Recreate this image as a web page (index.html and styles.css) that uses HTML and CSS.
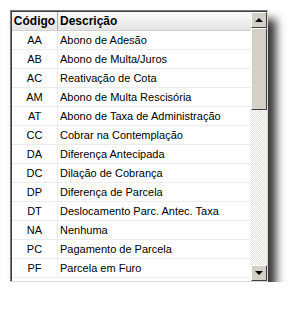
FILE: index.html
```html
<!DOCTYPE html>
<html lang="pt">
<head>
<meta charset="UTF-8">
<title>Códigos</title>
<link rel="stylesheet" href="styles.css">
</head>
<body>

<div class="frame">
  <div class="grid">
    <div class="row head">
      <div class="code">Código</div>
      <div class="desc">Descrição</div>
    </div>
    <div class="row"><div class="code">AA</div><div class="desc">Abono de Adesão</div></div>
    <div class="row"><div class="code">AB</div><div class="desc">Abono de Multa/Juros</div></div>
    <div class="row"><div class="code">AC</div><div class="desc">Reativação de Cota</div></div>
    <div class="row"><div class="code">AM</div><div class="desc">Abono de Multa Rescisória</div></div>
    <div class="row"><div class="code">AT</div><div class="desc">Abono de Taxa de Administração</div></div>
    <div class="row"><div class="code">CC</div><div class="desc">Cobrar na Contemplação</div></div>
    <div class="row"><div class="code">DA</div><div class="desc">Diferença Antecipada</div></div>
    <div class="row"><div class="code">DC</div><div class="desc">Dilação de Cobrança</div></div>
    <div class="row"><div class="code">DP</div><div class="desc">Diferença de Parcela</div></div>
    <div class="row"><div class="code">DT</div><div class="desc">Deslocamento Parc. Antec. Taxa</div></div>
    <div class="row"><div class="code">NA</div><div class="desc">Nenhuma</div></div>
    <div class="row"><div class="code">PC</div><div class="desc">Pagamento de Parcela</div></div>
    <div class="row"><div class="code">PF</div><div class="desc">Parcela em Furo</div></div>
  </div>
  <div class="scrollbar">
    <div class="btn"><span class="arrow up"></span></div>
    <div class="thumb"></div>
    <div class="track"></div>
    <div class="btn"><span class="arrow down"></span></div>
  </div>
</div>

</body>
</html>
```
FILE: styles.css
```css
body {
  margin: 0;
  background: #fff;
  font-family: 'Liberation Sans', Arial, sans-serif;
  font-size: 11px;
  color: #000;
}
.frame {
  margin: 10px 0 0 10px;
  width: 256px;
  height: 270px;
  border: 1px solid #7a7a7a;
  border-right-color: #d8d8d8;
  border-bottom-color: #d8d8d8;
  display: flex;
  box-shadow: 8px 9px 9px rgba(0,0,0,0.8);
  background: #fff;
  overflow: hidden;
}
.grid {
  flex: 1;
  border-left: 1px solid #404040;
  border-top: 1px solid #404040;
  overflow: hidden;
}
.row {
  display: flex;
  height: 18px;
  line-height: 18px;
  border-bottom: 1px solid #ececec;
}
.row .code {
  width: 45px;
  text-align: center;
  border-right: 1px solid #ececec;
}
.row .desc {
  flex: 1;
  padding-left: 2px;
  white-space: nowrap;
}
.row.head {
  background: linear-gradient(#fbfbfb, #e4e4e4);
  font-weight: bold;
  font-size: 12px;
  border-bottom: 1px solid #d0d0d0;
}
.row.head .code {
  border-right-color: #a8a8a8;
}
.scrollbar {
  width: 16px;
  display: flex;
  flex-direction: column;
  border-top: 1px solid #404040;
  background: #fff;
}
.btn, .thumb {
  background: #d4d0c8;
  border: 1px solid;
  border-color: #fff #404040 #404040 #fff;
  box-sizing: border-box;
}
.btn {
  height: 16px;
  display: flex;
  align-items: center;
  justify-content: center;
}
.thumb {
  height: 82px;
}
.track {
  flex: 1;
  background: repeating-conic-gradient(#fff 0 25%, #e4e2dc 0 50%) 0 0 / 2px 2px;
}
.arrow {
  width: 0;
  height: 0;
  border-left: 4px solid transparent;
  border-right: 4px solid transparent;
}
.arrow.up {
  border-bottom: 4px solid #000;
}
.arrow.down {
  border-top: 4px solid #000;
}
```
